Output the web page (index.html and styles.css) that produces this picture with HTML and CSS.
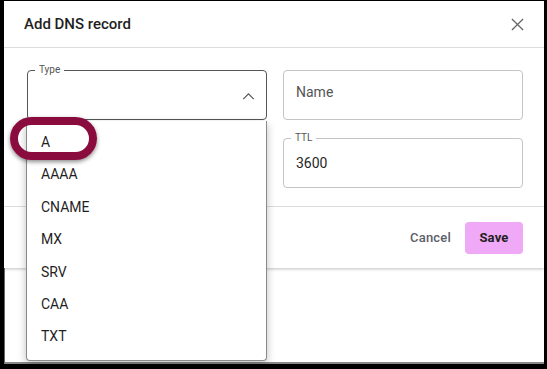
FILE: index.html
```html
<!DOCTYPE html>
<html>
<head>
    <meta charset="utf-8">
    <title>Add DNS record</title>
    <link rel="stylesheet" href="styles.css">
</head>
<body>
    <div class="screen">
        <div class="dialog">
            <div class="dialog-header">
                <h2>Add DNS record</h2>
                <svg class="close-btn" viewBox="0 0 14 14" fill="none" stroke="currentColor" stroke-width="1.4">
                    <path d="M1 1L13 13M13 1L1 13"></path>
                </svg>
            </div>
            <div class="dialog-body">
                <div class="field focused">
                    <span class="field-label">Type</span>
                    <span class="field-value"></span>
                    <svg class="chevron" viewBox="0 0 14 8" fill="none" stroke="currentColor" stroke-width="1.4">
                        <path d="M1 7L7 1L13 7"></path>
                    </svg>
                </div>
                <div class="field">
                    <span class="placeholder">Name</span>
                </div>
                <div></div>
                <div class="field">
                    <span class="field-label">TTL</span>
                    <span class="field-value">3600</span>
                </div>
            </div>
            <div class="dialog-footer">
                <button class="btn btn-text">Cancel</button>
                <button class="btn btn-primary">Save</button>
            </div>
        </div>
        <div class="backdrop"></div>

        <ul class="menu">
            <li>A</li>
            <li>AAAA</li>
            <li>CNAME</li>
            <li>MX</li>
            <li>SRV</li>
            <li>CAA</li>
            <li>TXT</li>
        </ul>
        <div class="highlight"></div>
    </div>
</body>
</html>
```

FILE: styles.css
```css
body {
    margin: 0;
    background: #000;
    font-family: Roboto, "Liberation Sans", sans-serif;
}
.screen {
    position: relative;
    margin: 1px 3px 0 4px;
    height: 363px;
    background: #fff;
    display: flex;
    flex-direction: column;
}
.dialog {
    height: 267px;
    background: #fff;
    box-shadow: 0 1px 3px rgba(0, 0, 0, 0.25);
    display: flex;
    flex-direction: column;
    z-index: 1;
}
.dialog-header {
    display: flex;
    align-items: center;
    justify-content: space-between;
    height: 46px;
    padding: 0 20px 0 20px;
    border-bottom: 1px solid #dcdcdc;
}
.dialog-header h2 {
    margin: 0;
    font-size: 15px;
    font-weight: 500;
    color: #1f1f1f;
}
.close-btn {
    width: 13px;
    height: 13px;
    color: #666;
}
.dialog-body {
    display: grid;
    grid-template-columns: 240px 240px;
    column-gap: 16px;
    row-gap: 18px;
    padding: 22px 20px 18px 23px;
    border-bottom: 1px solid #dcdcdc;
}
.field {
    position: relative;
    height: 48px;
    border: 1px solid #c4c4c4;
    border-radius: 4px;
    display: flex;
    align-items: center;
    padding: 0 12px;
    font-size: 14px;
}
.field.focused {
    border-color: #555;
}
.field-label {
    position: absolute;
    top: -7px;
    left: 7px;
    padding: 0 4px;
    background: #fff;
    font-size: 10px;
    color: #555;
}
.placeholder {
    color: #555;
    padding-bottom: 6px;
}
.field-value {
    color: #1f1f1f;
}
.chevron {
    position: absolute;
    right: 11px;
    top: 22px;
    width: 13px;
    height: 7px;
    color: #555;
}
.dialog-footer {
    flex: 1;
    display: flex;
    align-items: center;
    justify-content: flex-end;
    gap: 14px;
    padding: 0 21px 0 20px;
}
.btn {
    font-family: Roboto, "Liberation Sans", sans-serif;
    font-size: 13px;
    font-weight: 500;
    border: none;
    background: none;
    height: 32px;
    border-radius: 4px;
    letter-spacing: 0.2px;
}
.btn-text {
    color: #5b6068;
    padding: 0;
}
.btn-primary {
    background: #f0a9f6;
    color: #1f1f1f;
    font-weight: 700;
    width: 58px;
}
.backdrop {
    flex: 1;
    border-left: 1px solid #666;
    border-bottom: 2px solid #888;
}
.menu {
    position: absolute;
    left: 22px;
    top: 120px;
    width: 241px;
    height: 240px;
    margin: 0;
    padding: 5px 0 0;
    box-sizing: border-box;
    list-style: none;
    background: #fff;
    border: 1px solid #8a8a8a;
    border-top: none;
    border-radius: 0 0 4px 4px;
    box-shadow: 0 3px 8px rgba(0, 0, 0, 0.25);
    z-index: 2;
}
.menu li {
    height: 32.4px;
    line-height: 32.4px;
    padding-left: 14px;
    font-size: 14px;
    color: #1f1f1f;
}
.highlight {
    position: absolute;
    left: 6px;
    top: 116px;
    width: 71px;
    height: 27px;
    border: 8px solid #8a0b3e;
    border-radius: 22px;
    box-shadow: 0 2px 4px rgba(0, 0, 0, 0.45);
    z-index: 3;
}
```
